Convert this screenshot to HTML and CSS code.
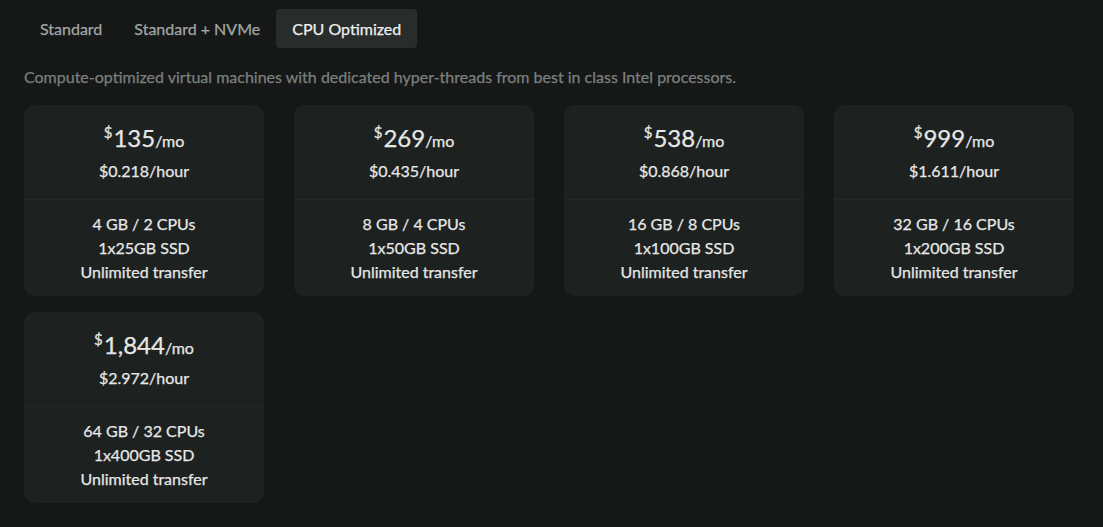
FILE: index.html
```html
<!DOCTYPE html>
<html lang="en">
<head>
    <meta charset="UTF-8">
    <meta name="viewport" content="width=device-width, initial-scale=1.0">
    <title>CPU Optimized Plans</title>
    <link rel="stylesheet" href="styles.css">
</head>
<body>

    <div class="tabs">
        <button class="tab">Standard</button>
        <button class="tab">Standard + NVMe</button>
        <button class="tab tab-active">CPU Optimized</button>
    </div>

    <p class="description">Compute-optimized virtual machines with dedicated hyper-threads from best in class Intel processors.</p>

    <div class="plan-grid">
        <div class="plan-card">
            <div class="plan-price">
                <div class="price-month"><span class="currency">$</span><span class="amount">135</span><span class="period">/mo</span></div>
                <div class="price-hour">$0.218/hour</div>
            </div>
            <div class="plan-specs">
                <div>4 GB / 2 CPUs</div>
                <div>1x25GB SSD</div>
                <div>Unlimited transfer</div>
            </div>
        </div>

        <div class="plan-card">
            <div class="plan-price">
                <div class="price-month"><span class="currency">$</span><span class="amount">269</span><span class="period">/mo</span></div>
                <div class="price-hour">$0.435/hour</div>
            </div>
            <div class="plan-specs">
                <div>8 GB / 4 CPUs</div>
                <div>1x50GB SSD</div>
                <div>Unlimited transfer</div>
            </div>
        </div>

        <div class="plan-card">
            <div class="plan-price">
                <div class="price-month"><span class="currency">$</span><span class="amount">538</span><span class="period">/mo</span></div>
                <div class="price-hour">$0.868/hour</div>
            </div>
            <div class="plan-specs">
                <div>16 GB / 8 CPUs</div>
                <div>1x100GB SSD</div>
                <div>Unlimited transfer</div>
            </div>
        </div>

        <div class="plan-card">
            <div class="plan-price">
                <div class="price-month"><span class="currency">$</span><span class="amount">999</span><span class="period">/mo</span></div>
                <div class="price-hour">$1.611/hour</div>
            </div>
            <div class="plan-specs">
                <div>32 GB / 16 CPUs</div>
                <div>1x200GB SSD</div>
                <div>Unlimited transfer</div>
            </div>
        </div>

        <div class="plan-card">
            <div class="plan-price">
                <div class="price-month"><span class="currency">$</span><span class="amount">1,844</span><span class="period">/mo</span></div>
                <div class="price-hour">$2.972/hour</div>
            </div>
            <div class="plan-specs">
                <div>64 GB / 32 CPUs</div>
                <div>1x400GB SSD</div>
                <div>Unlimited transfer</div>
            </div>
        </div>
    </div>

</body>
</html>
```

FILE: styles.css
```css
body {
    font-family: 'Lato', 'Liberation Sans', sans-serif;
    background-color: #161817;
    color: #e6e8e7;
    margin: 0;
    padding: 9px 24px;
    -webkit-text-stroke: 0.25px currentColor;
}

.tabs {
    display: flex;
}

.tab {
    font-family: inherit;
    font-size: 16px;
    background: none;
    color: #a2a6a5;
    border: none;
    border-radius: 4px;
    height: 39px;
    padding: 0 16px;
    cursor: pointer;
}

.tab-active {
    background-color: #282c2b;
    color: #eef0ef;
}

.description {
    font-size: 16px;
    color: #7b807e;
    margin: 19px 0 18px;
    line-height: 20px;
}

.plan-grid {
    display: grid;
    grid-template-columns: repeat(4, 240px);
    column-gap: 30px;
    row-gap: 16px;
}

.plan-card {
    background-color: #1d211f;
    border-radius: 10px;
    text-align: center;
}

.plan-price {
    padding: 20px 0 16px;
    border-bottom: 1px solid #242826;
}

.price-month {
    height: 32px;
    line-height: 32px;
}

.price-month span {
    line-height: 1;
}

.currency {
    font-size: 15px;
    vertical-align: 9px;
    margin-right: 1px;
}

.amount {
    font-size: 24px;
}

.period {
    font-size: 16px;
}

.price-hour {
    font-size: 16px;
    line-height: 24px;
    margin-top: 2px;
}

.plan-specs {
    font-size: 16px;
    line-height: 24px;
    padding: 12px 0;
}
```
